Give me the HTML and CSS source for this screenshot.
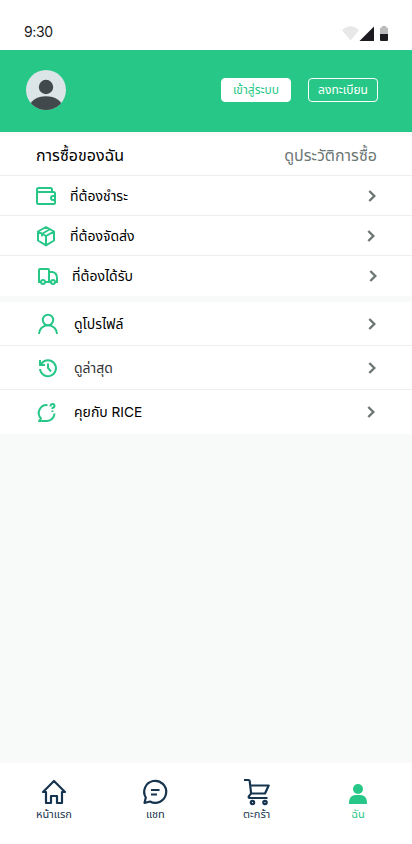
FILE: index.html
```html
<!DOCTYPE html>
<html lang="th">
<head>
<meta charset="utf-8">
<meta name="viewport" content="width=device-width, initial-scale=1">
<title>RICE</title>
<link rel="stylesheet" href="styles.css">
</head>
<body>
<div class="screen">
  <div class="status">
    <span class="time">9:30</span>
    <svg class="status-icons" width="46" height="17" viewBox="0 0 46 17">
      <path d="M0 4.200C5 -1 12 -1 17 4.200L8.500 14.500Z" fill="#e8e8e8"/>
      <path d="M32 .5V15H17.500Z" fill="#1d1b20"/>
      <path d="M38 8V2.500Q38 1.500 39 1.500H40V0H44V1.500H45Q46 1.500 46 2.500V8Z" fill="#bbb"/>
      <path d="M38 8H46V14Q46 15 45 15H39Q38 15 38 14Z" fill="#1d1b20"/>
    </svg>
  </div>
  <header class="header">
    <svg class="avatar" width="40" height="40" viewBox="0 0 40 40">
      <defs><clipPath id="round"><circle cx="20" cy="20" r="20"/></clipPath></defs>
      <g clip-path="url(#round)">
        <rect width="40" height="40" fill="#dbe4e6"/>
        <circle cx="20" cy="17" r="7.200" fill="#41494c"/>
        <ellipse cx="20" cy="37.500" rx="16.500" ry="11.300" fill="#41494c"/>
      </g>
    </svg>
    <div class="actions">
      <a class="btn btn-solid">เข้าสู่ระบบ</a>
      <a class="btn btn-outline">ลงทะเบียน</a>
    </div>
  </header>
  <section class="card purchases">
    <div class="card-head"><h1>การซื้อของฉัน</h1><a>ดูประวัติการซื้อ</a></div>
    <a class="row">
      <svg class="icon" width="24" height="24" viewBox="0 0 24 24"><path d="M3 6V18.500Q3 20 4.500 20H19.500Q21 20 21 18.500V9.500Q21 8 19.500 8H3M3 8V5.500Q3 4 4.500 4H16.500Q18 4 18 5.500V8M21 12H19A2 2 0 0 0 19 16H21"/></svg>
      <span class="label">ที่ต้องชำระ</span>
      <svg class="chevron" width="10" height="14" viewBox="0 0 10 14"><path d="M2.300 2L7.300 7L2.300 12"/></svg>
    </a>
    <a class="row">
      <svg class="icon" width="24" height="24" viewBox="0 0 24 24"><path stroke-linejoin="round" d="M12 3L20 7.500V16.500L12 21.300L4 16.500V7.500ZM4 7.500L12 12L20 7.500M12 12V21"/><path stroke-width="1.700" d="M8 12.500V9.700L16 5.200"/></svg>
      <span class="label">ที่ต้องจัดส่ง</span>
      <svg class="chevron shift-1" width="10" height="14" viewBox="0 0 10 14"><path d="M2.300 2L7.300 7L2.300 12"/></svg>
    </a>
    <a class="row row-delivery">
      <svg class="icon" width="24" height="24" viewBox="0 0 24 24"><path d="M5 18H3V6Q3 5 4 5H12Q13 5 13 6V18H9M13 8H16.500Q21 9 21 14V18H19M13 18H15"/><circle cx="7" cy="18" r="2"/><circle cx="17" cy="18" r="2"/></svg>
      <span class="label">ที่ต้องได้รับ</span>
      <svg class="chevron shift-2" width="10" height="14" viewBox="0 0 10 14"><path d="M2.300 2L7.300 7L2.300 12"/></svg>
    </a>
  </section>
  <section class="card account">
    <a class="row">
      <svg class="icon" width="24" height="24" viewBox="0 0 24 24"><circle cx="12" cy="8" r="5.200"/><path d="M3 22A9 8.800 0 0 1 21 22"/></svg>
      <span class="label">ดูโปรไฟล์</span>
      <svg class="chevron" width="10" height="14" viewBox="0 0 10 14"><path d="M2.300 2L7.300 7L2.300 12"/></svg>
    </a>
    <a class="row recent">
      <svg class="icon" width="24" height="24" viewBox="0 0 24 24"><path d="M4 13A8 8 0 1 0 5.500 7.500M4 4V9H9M4 9L6.500 6.500M12 7.500V12L15 15.500"/></svg>
      <span class="label">ดูล่าสุด</span>
      <svg class="chevron" width="10" height="14" viewBox="0 0 10 14"><path d="M2.300 2L7.300 7L2.300 12"/></svg>
    </a>
    <a class="row row-talk">
      <svg class="icon" width="24" height="24" viewBox="0 0 24 24"><path stroke-linejoin="round" d="M12.500 5A8 8 0 0 0 6 18.500L4 21H12A8 8 0 0 0 19.500 13.500M15.500 6.500V5.500Q16 4 17.500 4Q19.500 4 19.500 6Q19.500 7.500 17.500 8V9M17.500 10.500V12"/></svg>
      <span class="label">คุยกับ <span class="brand">RICE</span></span>
      <svg class="chevron shift-1" width="10" height="14" viewBox="0 0 10 14"><path d="M2.300 2L7.300 7L2.300 12"/></svg>
    </a>
  </section>
  <nav class="tabs">
    <a class="tab">
      <svg width="28" height="28" viewBox="0 0 28 28"><path stroke-linejoin="round" d="M14 3L3 14H6V25H11V18H17V25H22V14H25Z"/></svg>
      <span>หน้าแรก</span>
    </a>
    <a class="tab">
      <svg width="28" height="28" viewBox="0 0 28 28"><path stroke-linejoin="round" d="M3.500 25L4.800 19.500A11 11 0 1 1 9 23.500ZM10 12H18.500M10 16.500H16"/></svg>
      <span>แชท</span>
    </a>
    <a class="tab">
      <svg width="28" height="28" viewBox="0 0 28 28"><path stroke-linejoin="round" d="M1 2H5.500Q6.500 2 6.700 3L8 14.500Q8.200 16 6.500 17.500Q4.500 20 7 20H24.500M7.200 7.500H25.700L22 15.500H8"/><circle cx="9.500" cy="24.500" r="1.700"/><circle cx="22" cy="24.500" r="1.700"/></svg>
      <span>ตะกร้า</span>
    </a>
    <a class="tab tab-me">
      <svg width="28" height="28" viewBox="0 0 28 28"><circle cx="14" cy="11" r="5"/><path d="M5 26V24Q5.500 17.500 11 17H17Q22.500 17.500 23 24V26Z"/></svg>
      <span>ฉัน</span>
    </a>
  </nav>
</div>
</body>
</html>
```
FILE: styles.css
```css
* { box-sizing: border-box; }
body { margin: 0; font-family: "Noto Sans Thai", "Noto Sans", sans-serif; color: #000; }
.screen { display: flex; flex-direction: column; width: 412px; height: 844px; background: #f7faf9; }
svg { display: block; flex: none; }
.status { display: flex; justify-content: space-between; height: 50px; padding: 23px 24px 0; background: #fff; }
.time { font: 14px/17px Inter, sans-serif; letter-spacing: -.4px; color: #1d1b20; }
.status-icons { margin-top: 3px; }
.header { display: flex; justify-content: space-between; height: 82px; padding: 20px 34px 0 26px; background: #26c787; }
.actions { display: flex; gap: 17px; padding-top: 8px; }
.btn { display: flex; align-items: center; justify-content: center; width: 70px; height: 24px; border: 1px solid #fff; border-radius: 4px; font-size: 12px; color: #fff; white-space: nowrap; }
.btn-solid { background: #fff; color: #26c787; }
.card { background: #fff; }
.purchases { border-top: 4px solid #fafafa; }
.card-head { display: flex; align-items: center; justify-content: space-between; height: 40px; padding: 0 35px 0 36px; border-bottom: 1px solid #eee; font-size: 16px; line-height: 24px; }
h1 { margin: 0; font-size: 16px; font-weight: 400; }
.card-head a { color: #6c7775; }
.row { display: flex; align-items: center; height: 40px; padding: 0 35px 0 34px; border-bottom: 1px solid #eee; font-size: 14px; line-height: 20px; }
.row:last-child { border-bottom: 0; }
.label { flex: 1; margin-left: 12px; padding-top: 2px; }
.row:last-child .label { padding-top: 1px; }
.row-delivery { padding-left: 36px; }
.icon { fill: none; stroke: #26c787; stroke-width: 2; }
.chevron { fill: none; stroke: #6c7775; stroke-width: 2.4; }
.shift-1 { margin-right: 1px; }
.shift-2 { margin-right: -1px; }
.account { margin-top: 6px; }
.account .row { height: 44px; padding-left: 36px; }
.account .label { margin-left: 14px; }
.recent .label { color: #333; }
.account .row-talk { padding-left: 35px; }
.account .row-talk .label { margin-left: 15px; }
.brand { font-family: Inter, sans-serif; font-size: 13.7px; }
.tabs { display: flex; justify-content: space-between; height: 81px; margin-top: auto; padding: 15px 4px 0; background: #fff; }
.tab { display: flex; flex-direction: column; align-items: center; width: 100px; font-size: 11px; line-height: 17px; color: #17344f; }
.tab svg { fill: none; stroke: currentColor; stroke-width: 2.2; }
.tab-me { color: #26c787; }
.tab svg:only-of-type { overflow: visible; }
.tab-me svg { fill: currentColor; stroke: none; }
```
